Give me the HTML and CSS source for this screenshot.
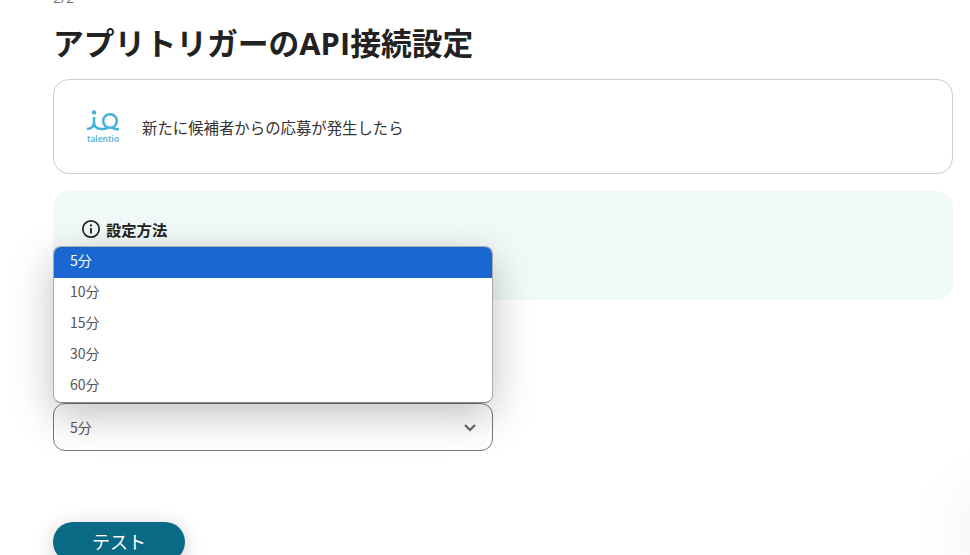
FILE: index.html
```html
<!DOCTYPE html>
<html lang="ja">
<head>
<meta charset="utf-8">
<title>アプリトリガーのAPI接続設定</title>
<link rel="stylesheet" href="styles.css">
</head>
<body>
<main class="page">
  <p class="step">2/2</p>
  <h1 class="title">アプリトリガーのAPI接続設定</h1>
  <section class="app-card">
    <div class="logo">
      <svg class="logo-mark" viewBox="0 0 34 21" width="34" height="21" aria-hidden="true">
        <circle cx="8" cy="2.400" r="2.200" fill="#45b0dc"/>
        <path d="M8 7v6c0 4-3 5.500-7 6" fill="none" stroke="#45b0dc" stroke-width="2.500"/>
        <path d="M8 13c0 4 3 5.500 7 6 2.500.3 5 0 6.500-1.500M26.500 17.500c1.500 1.500 3.500 2 6.500 1.500" fill="none" stroke="#45b0dc" stroke-width="2.500"/>
        <circle cx="24" cy="11" r="6.800" fill="none" stroke="#45b0dc" stroke-width="2.500"/>
      </svg>
      <span class="logo-text">talentio</span>
    </div>
    <p class="app-text">新たに候補者からの応募が発生したら</p>
  </section>
  <section class="notice">
    <div class="notice-head">
      <svg class="info" viewBox="0 0 20 20" width="20" height="20" aria-hidden="true">
        <circle cx="10" cy="10" r="8.200" fill="none" stroke="#222" stroke-width="1.700"/>
        <rect x="9.100" y="9" width="1.800" height="5.500" fill="#222"/>
        <circle cx="10" cy="6.400" r="1.150" fill="#222"/>
      </svg>
      <strong class="notice-title">設定方法</strong>
    </div>
  </section>
  <div class="field">
    <div class="select">
      <span>5分</span>
      <svg viewBox="0 0 14 9" width="14" height="9" aria-hidden="true"><path d="M2 2l5 5 5-5" fill="none" stroke="#666" stroke-width="2.200"/></svg>
    </div>
    <ul class="menu">
      <li class="active">5分</li>
      <li>10分</li>
      <li>15分</li>
      <li>30分</li>
      <li>60分</li>
    </ul>
  </div>
  <button class="test" type="button">テスト</button>
</main>
<div class="corner-shadow"></div>
</body>
</html>
```
FILE: styles.css
```css
* { box-sizing: border-box; }
html, body {
  margin: 0;
  height: 555px;
  overflow: hidden;
  background: #fff;
}
body {
  position: relative;
  font-family: "Noto Sans CJK JP", "Open Sans", sans-serif;
  color: #222;
}
.page {
  width: 900px;
  margin: -10px 0 0 53px;
}
.step {
  margin: 0;
  height: 16px;
  font-family: "Open Sans", "Noto Sans CJK JP", sans-serif;
  font-size: 14px;
  line-height: 16px;
  color: #777;
}
.title {
  margin: 15px 0 0;
  font-family: "Open Sans", "Noto Sans CJK JP", sans-serif;
  font-size: 30.8px;
  line-height: 44px;
  font-weight: 700;
  color: #222;
}
.app-card {
  display: flex;
  align-items: center;
  gap: 22px;
  height: 95px;
  margin-top: 14px;
  padding-left: 32px;
  border: 1px solid #cdcdcd;
  border-radius: 16px;
}
.logo {
  display: flex;
  flex-direction: column;
  align-items: center;
  width: 34px;
}
.logo-mark { display: block; width: 34px; height: 21px; }
.logo-text {
  margin-top: 2px;
  font-family: "Open Sans", sans-serif;
  font-size: 8.5px;
  line-height: 11px;
  font-weight: 600;
  color: #45b0dc;
}
.app-text {
  margin: 0;
  font-size: 15.4px;
  line-height: 20px;
  color: #333;
}
.notice {
  height: 109px;
  margin-top: 17px;
  padding: 28px;
  border-radius: 16px;
  background: #f1faf8;
}
.notice-head {
  display: flex;
  align-items: center;
  gap: 5px;
  font-size: 15.3px;
  line-height: 20px;
}
.info { display: block; }
.field {
  position: relative;
  width: 440px;
  margin-top: 103px;
}
.select {
  display: flex;
  align-items: center;
  justify-content: space-between;
  height: 48px;
  padding: 0 15px 0 16px;
  border: 1px solid #777;
  border-radius: 12px;
  font-size: 14px;
  color: #555;
}
.menu {
  position: absolute;
  left: 0;
  right: 0;
  bottom: 48px;
  margin: 0;
  padding: 0;
  list-style: none;
  overflow: hidden;
  background: #fff;
  border: 1px solid #aaa;
  border-bottom-color: #888;
  border-radius: 8px;
  box-shadow: 0 12px 40px rgba(0,0,0,.25);
}
.menu li {
  height: 31px;
  padding: 0 16px;
  font-size: 14px;
  line-height: 27px;
  color: #555;
}
.menu .active {
  background: #1a67d2;
  color: #fff;
}
.test {
  display: block;
  width: 132px;
  height: 40px;
  margin-top: 71px;
  padding: 0 0 3px;
  border: 0;
  border-radius: 20px;
  background: #0a6a85;
  color: #fff;
  font-family: inherit;
  font-size: 18px;
  line-height: 34px;
  box-shadow: 0 4px 20px rgba(0,0,0,.2);
}
.corner-shadow {
  position: absolute;
  right: -50px;
  bottom: -10px;
  width: 50px;
  height: 70px;
  border-radius: 50%;
  box-shadow: 0 0 70px rgba(0,0,0,.11);
}
```
